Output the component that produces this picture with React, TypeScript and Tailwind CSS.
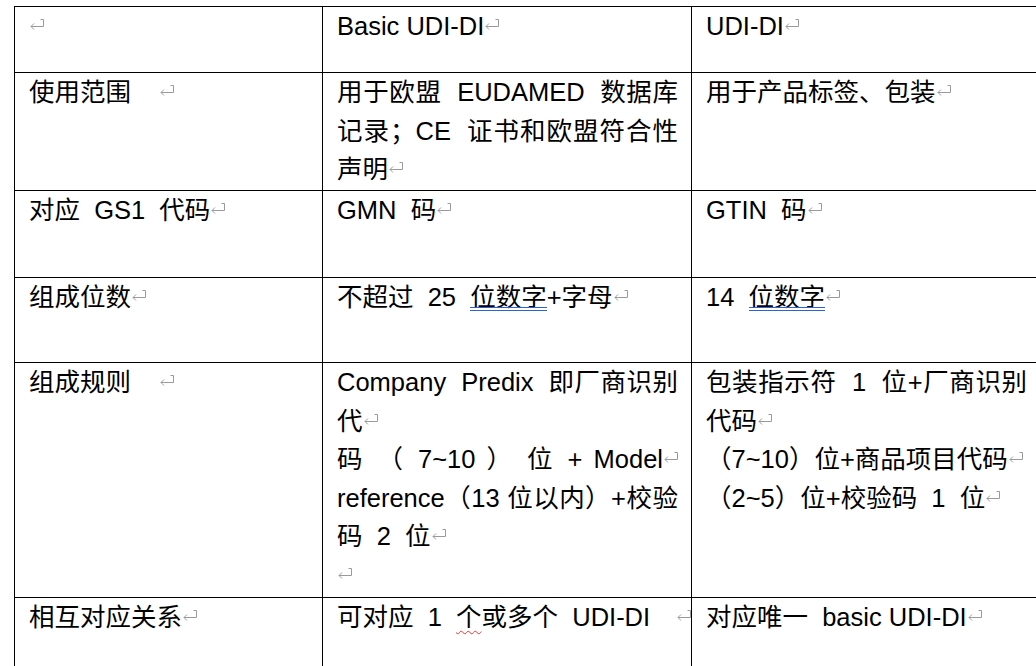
import React from "react";

const g = (s: string) => s.replace(/  /g, "\u00a0 ");

function P({ className = "" }: { className?: string }) {
  return (
    <svg
      width="14"
      height="11"
      viewBox="0 0 14 11"
      className={"inline-block align-[5px] ml-[1px] " + className}
      fill="none"
      stroke="#9a9a9a"
      strokeWidth="1"
    >
      <path d="M10.5 0.5 H13.5 V7.5 H1 M4 4.5 L1 7.5 L4 10.5" />
    </svg>
  );
}

function J({ children }: { children: React.ReactNode }) {
  return <div className="text-justify [text-align-last:justify] whitespace-nowrap">{children}</div>;
}

function U({ children }: { children: React.ReactNode }) {
  return (
    <span className="relative">
      {children}
      <span className="absolute left-0 right-0 top-[24px] h-[4px] border-y border-[#2b62d6]" />
    </span>
  );
}

function Cell({ children }: { children?: React.ReactNode }) {
  return (
    <div className="border-r border-b border-black pl-[14px] pr-[13px] pt-0 overflow-hidden">
      {children}
    </div>
  );
}

export default function App() {
  return (
    <div className="w-[1036px] h-[666px] overflow-hidden bg-white">
      <div className="ml-[14px] mt-[6px] w-max border-l border-t border-black grid grid-cols-[308px_369px_349px] grid-rows-[66px_118px_87px_85px_235px_100px] font-['Liberation_Sans','Noto_Sans_CJK_SC',sans-serif] text-[25.5px] leading-[38.5px] text-black">
        {/* Row 1 */}
        <Cell>
          <div>
            <P className="ml-0" />
          </div>
        </Cell>
        <Cell>
          <div>
            Basic UDI-DI
            <P />
          </div>
        </Cell>
        <Cell>
          <div>
            UDI-DI
            <P />
          </div>
        </Cell>

        {/* Row 2 */}
        <Cell>
          <div>
            使用范围
            <P className="ml-[29px]" />
          </div>
        </Cell>
        <Cell>
          <J>{g("用于欧盟  EUDAMED  数据库")}</J>
          <J>{g("记录；CE  证书和欧盟符合性")}</J>
          <div>
            声明
            <P />
          </div>
        </Cell>
        <Cell>
          <div>
            用于产品标签、包装
            <P />
          </div>
        </Cell>

        {/* Row 3 */}
        <Cell>
          <div>
            {g("对应  GS1  代码")}
            <P />
          </div>
        </Cell>
        <Cell>
          <div>
            {g("GMN  码")}
            <P />
          </div>
        </Cell>
        <Cell>
          <div>
            {g("GTIN  码")}
            <P />
          </div>
        </Cell>

        {/* Row 4 */}
        <Cell>
          <div>
            组成位数
            <P />
          </div>
        </Cell>
        <Cell>
          <div>
            {g("不超过  25  ")}
            <U>位数字</U>
            +字母
            <P />
          </div>
        </Cell>
        <Cell>
          <div>
            {g("14  ")}
            <U>位数字</U>
            <P />
          </div>
        </Cell>

        {/* Row 5 */}
        <Cell>
          <div>
            组成规则
            <P className="ml-[29px]" />
          </div>
        </Cell>
        <Cell>
          <J>{g("Company  Predix  即厂商识别")}</J>
          <div>
            代
            <P />
          </div>
          <J>
            {g("码 （ 7~10 ） 位 + Model")}
            <P />
          </J>
          <J>{"reference（13 位以内）+校验"}</J>
          <div>
            {g("码  2  位")}
            <P />
          </div>
          <div>
            <P className="ml-0" />
          </div>
        </Cell>
        <Cell>
          <J>{g("包装指示符  1  位+厂商识别")}</J>
          <div>
            代码
            <P />
          </div>
          <div>
            （7~10）位+商品项目代码
            <P />
          </div>
          <div>
            {g("（2~5）位+校验码  1  位")}
            <P />
          </div>
        </Cell>

        {/* Row 6 */}
        <Cell>
          <div>
            相互对应关系
            <P />
          </div>
        </Cell>
        <Cell>
          <div className="flex">
            <span>
              {g("可对应  1  ")}
              <span className="underline decoration-wavy decoration-[#e53935] decoration-1 underline-offset-[4px]">
                个
              </span>
              {g("或多个  UDI-DI")}
            </span>
            <span className="ml-auto -mr-[13px]">
              <P className="ml-0" />
            </span>
          </div>
        </Cell>
        <Cell>
          <div>
            {g("对应唯一  basic UDI-DI")}
            <P />
          </div>
        </Cell>
      </div>
    </div>
  );
}
